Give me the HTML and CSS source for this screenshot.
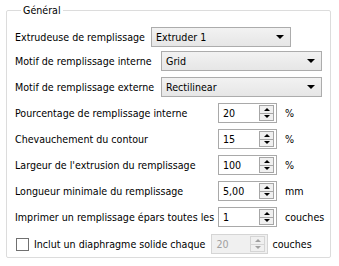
FILE: index.html
```html
<!DOCTYPE html>
<html lang="fr">

<head>
    <meta charset="UTF-8">
    <meta name="viewport" content="width=device-width, initial-scale=1.0">
    <title>Remplissage</title>
    <link rel="stylesheet" href="styles.css">
</head>

<body>
    <!-- groupe remplissage -->
    <fieldset class="group">
        <legend>Général</legend>

        <div class="row first">
            <span class="label">Extrudeuse de remplissage</span>
            <div class="combo short"><span>Extruder 1</span><i class="arrow"></i></div>
        </div>

        <div class="patterns">
            <span class="label">Motif de remplissage interne</span>
            <div class="combo"><span>Grid</span><i class="arrow"></i></div>
            <span class="label">Motif de remplissage externe</span>
            <div class="combo"><span>Rectilinear</span><i class="arrow"></i></div>
        </div>

        <div class="values">
            <span class="label">Pourcentage de remplissage interne</span>
            <div class="spin"><span class="value">20</span><div class="btns"><i class="up"></i><i class="down"></i></div></div>
            <span class="unit">%</span>

            <span class="label">Chevauchement du contour</span>
            <div class="spin"><span class="value">15</span><div class="btns"><i class="up"></i><i class="down"></i></div></div>
            <span class="unit">%</span>

            <span class="label">Largeur de l'extrusion du remplissage</span>
            <div class="spin"><span class="value">100</span><div class="btns"><i class="up"></i><i class="down"></i></div></div>
            <span class="unit">%</span>

            <span class="label">Longueur minimale du remplissage</span>
            <div class="spin"><span class="value">5,00</span><div class="btns"><i class="up"></i><i class="down"></i></div></div>
            <span class="unit">mm</span>

            <span class="label">Imprimer un remplissage épars toutes les</span>
            <div class="spin"><span class="value">1</span><div class="btns"><i class="up"></i><i class="down"></i></div></div>
            <span class="unit">couches</span>
        </div>

        <div class="row last">
            <span class="check"></span>
            <span class="label">Inclut un diaphragme solide chaque</span>
            <div class="spin disabled"><span class="value">20</span><div class="btns"><i class="up"></i><i class="down"></i></div></div>
            <span class="unit">couches</span>
        </div>
    </fieldset>
</body>

</html>
```

FILE: styles.css
```css
* {
    margin: 0;
    padding: 0;
    box-sizing: border-box;
}

body {
    width: 339px;
    height: 266px;
    background-color: #fff;
    color: #000;
    font-family: "DejaVu Sans Condensed", "DejaVu Sans", sans-serif;
    font-size: 10.6px;
    padding: 4px 8px 0 6px;
}

.group {
    height: 254px;
    border: 1px solid #dcdcdc;
    border-radius: 2px;
    padding: 10px 0 0 8px;
}

.group legend {
    margin-left: 6px;
    padding: 0 2px;
    line-height: 13px;
}

.row {
    display: flex;
    align-items: center;
}

.label {
    white-space: nowrap;
}

/* combobox */
.combo {
    display: flex;
    align-items: center;
    justify-content: space-between;
    width: 161px;
    height: 20px;
    padding: 0 6px 0 4px;
    border: 1px solid #acacac;
    background: linear-gradient(#f2f2f2, #e6e6e6);
}

.combo.short {
    width: 140px;
    margin-left: 6px;
}

.arrow {
    width: 0;
    height: 0;
    border-left: 4px solid transparent;
    border-right: 4px solid transparent;
    border-top: 4px solid #000;
}

.patterns {
    display: grid;
    grid-template-columns: 146px 161px;
    row-gap: 6px;
    align-items: center;
    margin-top: 4px;
}

.values {
    display: grid;
    grid-template-columns: 203px 59px auto;
    row-gap: 6px;
    align-items: center;
    margin-top: 6px;
}

.values .unit {
    margin-left: 8px;
}

/* spinbox */
.spin {
    display: flex;
    align-items: center;
    width: 59px;
    height: 20px;
    border: 1px solid #a9a9a9;
    background-color: #fff;
}

.spin .value {
    flex: 1;
    padding-left: 4px;
}

.btns {
    display: flex;
    flex-direction: column;
    width: 15px;
    height: 16px;
    margin-right: 2px;
    border: 1px solid #a6a6a6;
    background-color: #f0f0f0;
}

.btns i {
    flex: 1;
    display: flex;
    align-items: center;
    justify-content: center;
}

.btns .up {
    border-bottom: 1px solid #a6a6a6;
}

.btns .up::before,
.btns .down::before {
    content: "";
    border-left: 3px solid transparent;
    border-right: 3px solid transparent;
}

.btns .up::before {
    border-bottom: 3px solid #000;
}

.btns .down::before {
    border-top: 3px solid #000;
}

.spin.disabled {
    width: 57px;
    border-color: #d5d5d5;
    background-color: #f0f0f0;
    color: #a0a0a0;
}

.spin.disabled .btns {
    border-color: #d5d5d5;
}

.spin.disabled .btns .up {
    border-bottom-color: #d5d5d5;
}

.spin.disabled .btns .up::before {
    border-bottom-color: #a0a0a0;
}

.spin.disabled .btns .down::before {
    border-top-color: #a0a0a0;
}

.last {
    margin-top: 7px;
}

.check {
    width: 13px;
    height: 13px;
    border: 1px solid #707070;
    background-color: #fff;
    margin: 0 5px 0 1px;
}

.last .spin {
    margin-left: 6px;
}

.last .unit {
    margin-left: 4px;
}
```
